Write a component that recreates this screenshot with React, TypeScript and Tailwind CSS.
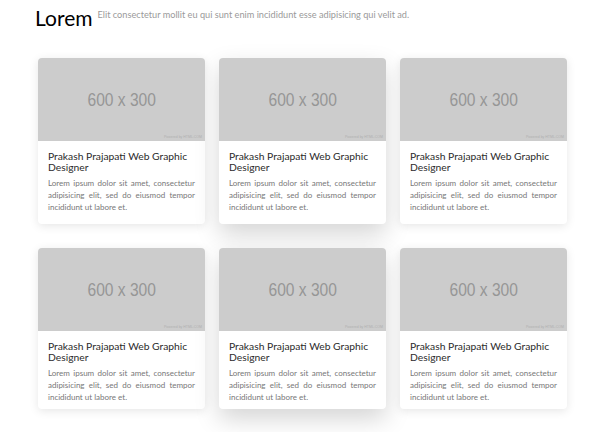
import React from "react";

function Card({ featured, h }: { featured?: boolean; h: "a" | "b" }) {
  return (
    <div
      className={
        "bg-white rounded-[4px] overflow-hidden " +
        (h === "a" ? "h-[166px] " : "h-[161px] ") +
        (featured
          ? "shadow-[0_10px_24px_rgba(0,0,0,0.17)]"
          : "shadow-[0_2px_10px_rgba(0,0,0,0.10)]")
      }
    >
      <div className="relative h-[83px] bg-[#cccccc] flex items-center justify-center">
        <span
          className="text-[#969696] text-[19px] leading-none scale-x-[0.82]"
          style={{ fontFamily: '"Liberation Sans", Arial, sans-serif' }}
        >
          600 x 300
        </span>
        <span
          className="absolute right-[3px] bottom-[2px] text-[3.5px] leading-none text-[#b0b0b0]"
          style={{ fontFamily: '"Liberation Sans", Arial, sans-serif' }}
        >
          Powered by HTML.COM
        </span>
      </div>
      <div className="px-[10px] pt-[10px]">
        <h3 className="text-[10.3px] leading-[11px] text-[#2b2b2b]">
          Prakash Prajapati Web Graphic Designer
        </h3>
        <p className="mt-[4px] text-[8px] leading-[12px] text-[#777777] text-justify">
          Lorem ipsum dolor sit amet, consectetur adipisicing elit, sed do
          eiusmod tempor incididunt ut labore et.
        </p>
      </div>
    </div>
  );
}

export default function App() {
  return (
    <div
      className="w-[600px] h-[432px] bg-white overflow-hidden"
      style={{ fontFamily: 'Lato, "Open Sans", sans-serif' }}
    >
      <div className="flex items-start pl-[35px] pt-[5px]">
        <h1 className="text-[21px] leading-[26px] text-black font-normal">Lorem</h1>
        <p className="ml-[5px] mt-[4px] text-[9.2px] leading-[12px] text-[#9a9a9a]">
          Elit consectetur mollit eu qui sunt enim incididunt esse adipisicing qui velit ad.
        </p>
      </div>
      <div className="pl-[38px] pt-[27px] grid grid-cols-[167px_167px_167px] gap-x-[14px] gap-y-[24px] items-start">
        <Card h="a" />
        <Card h="a" featured />
        <Card h="a" />
        <Card h="b" />
        <Card h="b" featured />
        <Card h="b" />
      </div>
    </div>
  );
}
